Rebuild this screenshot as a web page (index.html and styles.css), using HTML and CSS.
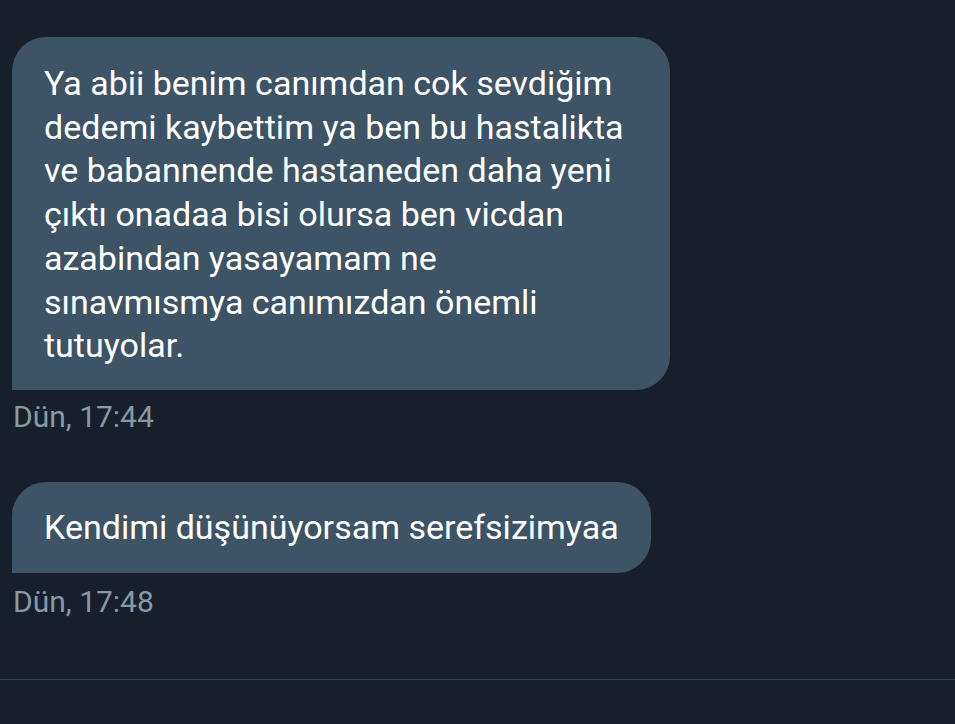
FILE: index.html
```html
<!DOCTYPE html>
<html lang="tr">
<head>
<meta charset="utf-8">
<link rel="stylesheet" href="styles.css">
</head>
<body>
<main class="chat">
  <div class="msg msg-first">
    <div class="bubble bubble-wide">Ya abii benim canımdan cok sevdiğim dedemi kaybettim ya ben bu hastalikta ve babannende hastaneden daha yeni çıktı onadaa bisi olursa ben vicdan azabindan yasayamam ne sınavmısmya canımızdan önemli tutuyolar.</div>
    <div class="time">Dün, 17:44</div>
  </div>
  <div class="msg msg-second">
    <div class="bubble">Kendimi düşünüyorsam serefsizimyaa</div>
    <div class="time">Dün, 17:48</div>
  </div>
</main>
<div class="divider"></div>
</body>
</html>
```
FILE: styles.css
```css
html, body {
  margin: 0;
  padding: 0;
  background: #17202a;
  height: 100%;
  overflow: hidden;
}
body {
  font-family: Roboto, "Noto Sans", sans-serif;
  color: #ffffff;
}
.chat {
  display: flex;
  flex-direction: column;
  padding: 37px 0 0 12px;
  height: 679px;
  box-sizing: border-box;
}
.msg {
  display: flex;
  flex-direction: column;
  align-items: flex-start;
}
.msg-second {
  margin-top: 47px;
}
.bubble {
  background: #3d5366;
  border-radius: 34px 34px 34px 0;
  font-size: 34px;
  line-height: 43.7px;
  padding: 25px 32px 22px 32px;
  box-sizing: border-box;
}
.bubble-wide {
  width: 658px;
}
.msg-second .bubble {
  padding: 24px 32px 23px 32px;
}
.time {
  color: #8899a6;
  font-size: 30px;
  line-height: 36px;
  margin-top: 9px;
  padding-left: 1px;
}
.msg-second .time {
  margin-top: 11px;
}
.divider {
  height: 1px;
  background: #38444d;
}
```
